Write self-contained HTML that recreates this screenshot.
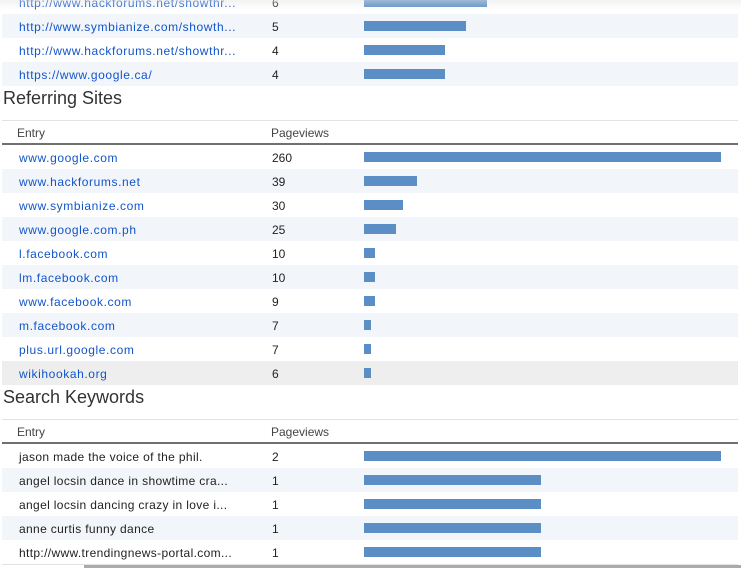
<!DOCTYPE html>
<html><head><style>
body{margin:0;width:741px;height:568px;overflow:hidden;background:#fff;font-family:"Liberation Sans",Arial,sans-serif;position:relative}
.r{position:absolute;left:2px;width:736px;height:24px;font-size:12px;line-height:26px}
.l{background:#f2f5fa}.g{background:#eee}
.r a{position:absolute;left:17px;color:#15c;text-decoration:none;letter-spacing:.6px}
.r span.k{position:absolute;left:17px;color:#222;letter-spacing:.35px}
.r span.n{position:absolute;left:270px;color:#222}
.r i{position:absolute;left:362px;top:7px;height:10px;background:#5b8ec4}
h2{position:absolute;left:3px;margin:0;font-weight:normal;font-size:18px;color:#333}
.t{position:absolute;left:2px;width:736px;height:1px;background:#e3e3e3}
.hd{position:absolute;left:2px;width:736px;height:22px;font-size:12px;color:#444;border-bottom:2px solid #707070}
.hd b{font-weight:normal;position:absolute;top:5px}
</style></head><body>
<div style="position:absolute;left:0;top:0;width:741px;height:10px;background:linear-gradient(#e6e6e6,rgba(255,255,255,0));z-index:2;opacity:.5"></div>
<div class="r" style="top:-10px"><a>http://www.hackforums.net/showthr...</a><span class="n">6</span><i style="width:123px"></i></div>
<div class="r l" style="top:14px"><a>http://www.symbianize.com/showth...</a><span class="n">5</span><i style="width:102px"></i></div>
<div class="r" style="top:38px"><a>http://www.hackforums.net/showthr...</a><span class="n">4</span><i style="width:81px"></i></div>
<div class="r l" style="top:62px"><a>https://www.google.ca/</a><span class="n">4</span><i style="width:81px"></i></div>
<h2 style="top:88px">Referring Sites</h2>
<div class="t" style="top:120px"></div>
<div class="hd" style="top:121px"><b style="left:15px">Entry</b><b style="left:269px">Pageviews</b></div>
<div class="r" style="top:145px"><a>www.google.com</a><span class="n">260</span><i style="width:357px"></i></div>
<div class="r l" style="top:169px"><a>www.hackforums.net</a><span class="n">39</span><i style="width:53px"></i></div>
<div class="r" style="top:193px"><a>www.symbianize.com</a><span class="n">30</span><i style="width:39px"></i></div>
<div class="r l" style="top:217px"><a>www.google.com.ph</a><span class="n">25</span><i style="width:32px"></i></div>
<div class="r" style="top:241px"><a>l.facebook.com</a><span class="n">10</span><i style="width:11px"></i></div>
<div class="r l" style="top:265px"><a>lm.facebook.com</a><span class="n">10</span><i style="width:11px"></i></div>
<div class="r" style="top:289px"><a>www.facebook.com</a><span class="n">9</span><i style="width:11px"></i></div>
<div class="r l" style="top:313px"><a>m.facebook.com</a><span class="n">7</span><i style="width:7px"></i></div>
<div class="r" style="top:337px"><a>plus.url.google.com</a><span class="n">7</span><i style="width:7px"></i></div>
<div class="r g" style="top:361px"><a>wikihookah.org</a><span class="n">6</span><i style="width:7px"></i></div>
<h2 style="top:387px">Search Keywords</h2>
<div class="t" style="top:419px"></div>
<div class="hd" style="top:420px"><b style="left:15px">Entry</b><b style="left:269px">Pageviews</b></div>
<div class="r" style="top:444px"><span class="k">jason made the voice of the phil.</span><span class="n">2</span><i style="width:357px"></i></div>
<div class="r l" style="top:468px"><span class="k">angel locsin dance in showtime cra...</span><span class="n">1</span><i style="width:177px"></i></div>
<div class="r" style="top:492px"><span class="k">angel locsin dancing crazy in love i...</span><span class="n">1</span><i style="width:177px"></i></div>
<div class="r l" style="top:516px"><span class="k">anne curtis funny dance</span><span class="n">1</span><i style="width:177px"></i></div>
<div class="r" style="top:540px"><span class="k">http://www.trendingnews-portal.com...</span><span class="n">1</span><i style="width:177px"></i></div>
<div class="t" style="top:564px"></div>
<div style="position:absolute;left:84px;top:565px;width:657px;height:3px;background:#aaa"></div>
</body></html>
